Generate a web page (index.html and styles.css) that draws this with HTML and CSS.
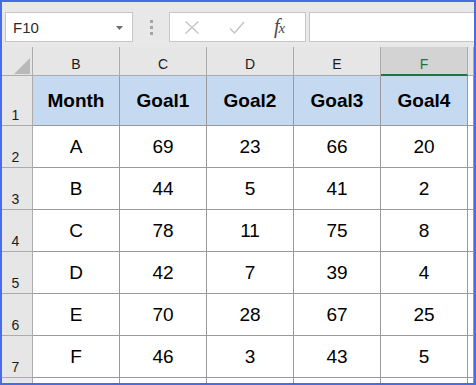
FILE: index.html
```html
<!DOCTYPE html>
<html>
<head>
<meta charset="utf-8">
<link rel="stylesheet" href="styles.css">
</head>
<body>
<div class="frame">
  <div class="toolbar">
    <div class="namebox">
      <span class="ref">F10</span>
      <svg class="caret" width="7" height="4" viewBox="0 0 7 4"><path d="M0 0h7L3.5 4z" fill="#6d6d6d"/></svg>
    </div>
    <div class="dots"><i></i><i></i><i></i></div>
    <div class="fbtns">
      <svg class="ico" width="16" height="13" viewBox="0 0 16 13"><path d="M1.5 0.5L14.5 12.5M14.5 0.5L1.5 12.5" stroke="#c4c4c4" stroke-width="1.3" fill="none"/></svg>
      <svg class="ico" width="16" height="13" viewBox="0 0 16 13"><path d="M1 7.5L5.5 12L15 1" stroke="#c4c4c4" stroke-width="1.4" fill="none"/></svg>
      <span class="fx">f<span class="x">x</span></span>
    </div>
    <div class="finput"></div>
  </div>
  <div class="sheet">
    <div class="hc corner"><span class="tri"></span></div>
    <div class="hc col">B</div>
    <div class="hc col">C</div>
    <div class="hc col">D</div>
    <div class="hc col">E</div>
    <div class="hc col sel">F</div>
    <div class="hc col"></div>

    <div class="hc rowh">1</div>
    <div class="c th">Month</div>
    <div class="c th">Goal1</div>
    <div class="c th">Goal2</div>
    <div class="c th">Goal3</div>
    <div class="c th">Goal4</div>
    <div class="c"></div>

    <div class="hc rowh">2</div>
    <div class="c">A</div><div class="c">69</div><div class="c">23</div><div class="c">66</div><div class="c">20</div><div class="c"></div>

    <div class="hc rowh">3</div>
    <div class="c">B</div><div class="c">44</div><div class="c">5</div><div class="c">41</div><div class="c">2</div><div class="c"></div>

    <div class="hc rowh">4</div>
    <div class="c">C</div><div class="c">78</div><div class="c">11</div><div class="c">75</div><div class="c">8</div><div class="c"></div>

    <div class="hc rowh">5</div>
    <div class="c">D</div><div class="c">42</div><div class="c">7</div><div class="c">39</div><div class="c">4</div><div class="c"></div>

    <div class="hc rowh">6</div>
    <div class="c">E</div><div class="c">70</div><div class="c">28</div><div class="c">67</div><div class="c">25</div><div class="c"></div>

    <div class="hc rowh">7</div>
    <div class="c">F</div><div class="c">46</div><div class="c">3</div><div class="c">43</div><div class="c">5</div><div class="c"></div>

    <div class="hc rowh last"></div>
    <div class="c last"></div><div class="c last"></div><div class="c last"></div><div class="c last"></div><div class="c last"></div><div class="c last"></div>
  </div>
</div>
</body>
</html>
```

FILE: styles.css
```css
* { box-sizing: border-box; }
html, body { margin: 0; padding: 0; background: #ffffff; }
.frame {
  width: 476px;
  height: 385px;
  border: 2px solid #4a6be6;
  background: #e8e8e8;
  overflow: hidden;
  font-family: "Liberation Sans", Arial, sans-serif;
}
.toolbar {
  height: 45px;
  display: flex;
  align-items: flex-start;
  padding: 10px 0 0 3px;
  background: #e8e8e8;
}
.namebox {
  width: 128px;
  height: 30px;
  background: #fff;
  border: 1px solid #c6c6c6;
  display: flex;
  align-items: center;
  justify-content: space-between;
  padding: 0 9px 0 7px;
}
.ref { font-size: 15px; color: #2b2b2b; }
.caret { margin-top: 1px; }
.dots {
  width: 36px;
  height: 30px;
  display: flex;
  flex-direction: column;
  align-items: center;
  justify-content: center;
  gap: 3px;
}
.dots i { display: block; width: 3px; height: 3px; background: #a5a5a5; }
.fbtns {
  width: 137px;
  height: 30px;
  background: #fff;
  border: 1px solid #c6c6c6;
  display: flex;
  align-items: center;
  padding-left: 14px;
  gap: 29px;
}
.fx {
  font-family: "Liberation Serif", "Times New Roman", serif;
  font-style: italic;
  font-size: 20px;
  color: #4a4a4a;
  letter-spacing: -1px;
  margin-top: -2px;
}
.fx .x { font-size: 15px; }
.finput {
  flex: 1;
  height: 30px;
  margin-left: 3px;
  background: #fff;
  border: 1px solid #c6c6c6;
  border-right: none;
}
.sheet {
  display: grid;
  grid-template-columns: 31px repeat(5, 87px) 6px;
  grid-template-rows: 29px 50px repeat(6, 42px) 5px;
  background: #fff;
}
.hc {
  background: #e6e6e6;
  border-right: 1px solid #ababab;
  border-bottom: 1px solid #ababab;
  color: #1a1a1a;
  font-size: 14px;
}
.col {
  display: flex;
  align-items: flex-end;
  justify-content: center;
  padding-bottom: 3px;
}
.col.sel {
  background: #d3d3d3;
  color: #217346;
  border-bottom: 2px solid #217346;
  padding-bottom: 2px;
}
.corner { position: relative; }
.tri {
  position: absolute;
  right: 2px;
  bottom: 1px;
  width: 0;
  height: 0;
  border-left: 16px solid transparent;
  border-bottom: 16px solid #b9b9b9;
}
.rowh {
  display: flex;
  align-items: flex-end;
  justify-content: center;
  padding: 0 3px 2px 0;
}
.c {
  border-right: 1px solid #9a9a9a;
  border-bottom: 1px solid #9a9a9a;
  display: flex;
  align-items: center;
  justify-content: center;
  font-size: 19px;
  color: #000;
  padding-top: 1px;
}
.c.th {
  background: #c5d9f1;
  font-weight: bold;
}
.last { border-bottom: none; }
```
